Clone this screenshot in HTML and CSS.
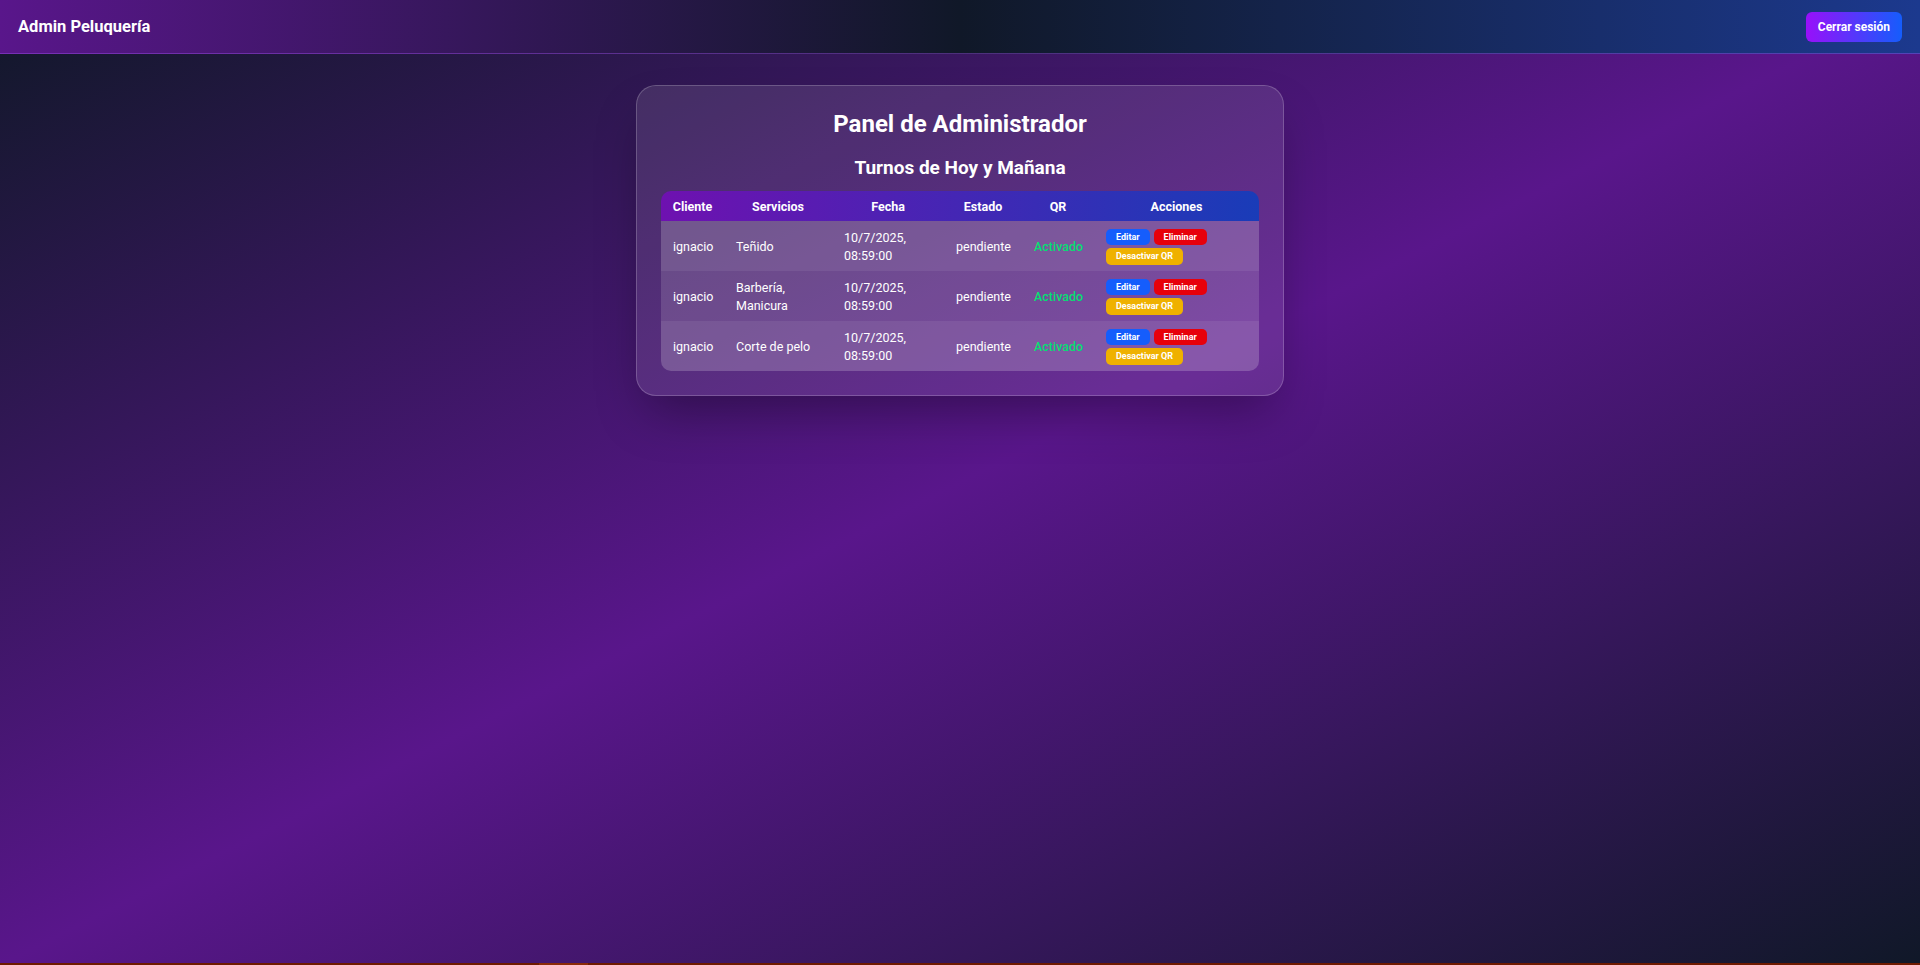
FILE: index.html
```html
<!DOCTYPE html>
<html lang="es">
<head>
<meta charset="utf-8">
<title>Admin Peluquería</title>
<link rel="stylesheet" href="styles.css">
</head>
<body>
<div class="page">
  <nav class="navbar">
    <span class="brand">Admin Peluquería</span>
    <button class="logout">Cerrar sesión</button>
  </nav>
  <main class="main">
    <section class="card">
      <h1 class="title">Panel de Administrador</h1>
      <h2 class="subtitle">Turnos de Hoy y Mañana</h2>
      <table class="turnos">
        <colgroup>
          <col class="c-cliente"><col class="c-serv"><col class="c-fecha"><col class="c-estado"><col class="c-qr"><col class="c-acc">
        </colgroup>
        <thead>
          <tr><th>Cliente</th><th>Servicios</th><th>Fecha</th><th>Estado</th><th>QR</th><th>Acciones</th></tr>
        </thead>
        <tbody>
          <tr>
            <td>ignacio</td><td>Teñido</td><td>10/7/2025, 08:59:00</td><td>pendiente</td><td class="activo">Activado</td>
            <td><div class="acciones"><button class="btn btn-edit">Editar</button><button class="btn btn-del">Eliminar</button><button class="btn btn-qr">Desactivar QR</button></div></td>
          </tr>
          <tr>
            <td>ignacio</td><td>Barbería, Manicura</td><td>10/7/2025, 08:59:00</td><td>pendiente</td><td class="activo">Activado</td>
            <td><div class="acciones"><button class="btn btn-edit">Editar</button><button class="btn btn-del">Eliminar</button><button class="btn btn-qr">Desactivar QR</button></div></td>
          </tr>
          <tr>
            <td>ignacio</td><td>Corte de pelo</td><td>10/7/2025, 08:59:00</td><td>pendiente</td><td class="activo">Activado</td>
            <td><div class="acciones"><button class="btn btn-edit">Editar</button><button class="btn btn-del">Eliminar</button><button class="btn btn-qr">Desactivar QR</button></div></td>
          </tr>
        </tbody>
      </table>
    </section>
  </main>
  <div class="bottom-strip"><span class="strip-seg"></span></div>
</div>
</body>
</html>
```
FILE: styles.css
```css
* { box-sizing: border-box; }
html, body { margin: 0; padding: 0; }
body {
  font-family: Roboto, "Noto Sans", Arial, sans-serif;
  color: #fff;
}
.page {
  min-height: 100vh;
  display: flex;
  flex-direction: column;
  background: linear-gradient(to bottom right, #101828 0%, #59168b 50%, #101828 100%);
}
.navbar {
  height: 54px;
  display: flex;
  align-items: center;
  justify-content: space-between;
  padding: 0 18px;
  background: linear-gradient(90deg, #59168b 0%, #101828 50%, #1c398e 100%);
  border-bottom: 1px solid rgba(168, 85, 247, 0.4);
}
.brand {
  font-weight: 700;
  font-size: 16.5px;
}
.logout {
  height: 30px;
  padding: 0 12px;
  border: none;
  border-radius: 6px;
  background: linear-gradient(90deg, #9810fa, #155dfc);
  color: #fff;
  font-family: inherit;
  font-weight: 700;
  font-size: 12px;
}
.main {
  flex: 1;
  display: flex;
  justify-content: center;
  align-items: flex-start;
  padding-top: 31px;
}
.card {
  width: 648px;
  padding: 24px;
  border-radius: 20px;
  border: 1px solid rgba(255, 255, 255, 0.2);
  background: rgba(255, 255, 255, 0.1);
  box-shadow: 0 25px 50px -12px rgba(0, 0, 0, 0.35);
}
.title {
  margin: 0 0 18px;
  text-align: center;
  font-size: 24px;
  line-height: 28px;
  font-weight: 700;
}
.subtitle {
  margin: 0 0 11px;
  text-align: center;
  font-size: 19px;
  line-height: 24px;
  font-weight: 700;
}
.turnos {
  width: 598px;
  table-layout: fixed;
  border-collapse: separate;
  border-spacing: 0;
  border-radius: 10px;
  overflow: hidden;
  font-size: 12.5px;
  line-height: 18px;
}
.c-cliente { width: 63px; }
.c-serv { width: 108px; }
.c-fecha { width: 112px; }
.c-estado { width: 78px; }
.c-qr { width: 72px; }
.c-acc { width: 165px; }
.turnos thead tr {
  background: linear-gradient(90deg, #6e11b0, #193cb8);
}
.turnos th {
  padding: 7px 0 5px;
  font-weight: 700;
  text-align: center;
}
.turnos td {
  height: 50px;
  padding: 1px 12px 0;
  text-align: left;
  vertical-align: middle;
}
.turnos tbody tr:nth-child(odd) { background: rgba(255, 255, 255, 0.2); }
.turnos tbody tr:nth-child(even) { background: rgba(255, 255, 255, 0.14); }
.activo { color: #05df72; font-weight: 500; }
.acciones {
  display: flex;
  flex-wrap: wrap;
  gap: 3px 4px;
  width: 120px;
}
.btn {
  height: 16px;
  padding: 0 10px;
  border: none;
  border-radius: 5px;
  color: #fff;
  font-family: inherit;
  font-weight: 700;
  font-size: 9px;
  line-height: 16px;
}
.btn-qr { height: 17px; }
.btn-edit { background: #155dfc; }
.btn-del { background: #e7000b; }
.btn-qr { background: #efb100; }
.bottom-strip {
  height: 2px;
  background: #6e1a00;
  display: flex;
  padding-left: 539px;
}
.strip-seg {
  width: 49px;
  background: #8a2a08;
}
```
